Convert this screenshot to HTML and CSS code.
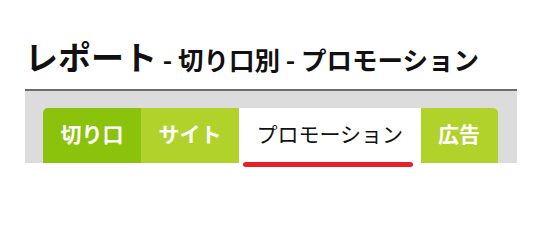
FILE: index.html
```html
<!DOCTYPE html>
<html lang="ja">
<head>
<meta charset="utf-8">
<title>レポート - 切り口別 - プロモーション</title>
<link rel="stylesheet" href="styles.css">
</head>
<body>
<div class="page">
  <h1 class="title">レポート<span class="sub"> - 切り口別 - プロモーション</span></h1>
  <nav class="tabbar">
    <ul class="tabs">
      <li class="tab tab-dark tab-first">切り口</li>
      <li class="tab tab-light">サイト</li>
      <li class="tab tab-active">プロモーション<span class="underline"></span></li>
      <li class="tab tab-light tab-last">広告</li>
    </ul>
  </nav>
</div>
</body>
</html>
```
FILE: styles.css
```css
html, body {
  margin: 0;
  padding: 0;
  background: #ffffff;
}
body {
  font-family: "Noto Sans CJK JP", "Noto Sans", sans-serif;
  color: #111111;
}
.page {
  width: 492px;
  padding: 36px 0 60px 25px;
}
.title {
  margin: 0;
  height: 53px;
  font-size: 33px;
  line-height: 40px;
  font-weight: 700;
  white-space: nowrap;
}
.sub {
  font-size: 25.5px;
}
.tabbar {
  border-top: 2px solid #6c6c6c;
  background: #dcdcdc;
  padding: 17px 0 0 18px;
}
.tabs {
  display: flex;
  margin: 0;
  padding: 0;
  list-style: none;
}
.tab {
  position: relative;
  display: flex;
  align-items: center;
  box-sizing: border-box;
  height: 55px;
  padding: 0 17.5px 5px;
  font-size: 21px;
  line-height: 1;
  font-weight: 700;
  color: #ffffff;
}
.tab-dark {
  background: #8bc20c;
}
.tab-light {
  background: #b1d22b;
}
.tab-first {
  border-top-left-radius: 5px;
}
.tab-last {
  border-top-right-radius: 5px;
}
.tab-active {
  background: #ffffff;
  color: #111111;
  font-weight: 400;
}
.underline {
  position: absolute;
  z-index: 2;
  left: 4px;
  right: 8px;
  bottom: -4px;
  height: 5px;
  border-radius: 3px;
  background: #e8202a;
}
```
